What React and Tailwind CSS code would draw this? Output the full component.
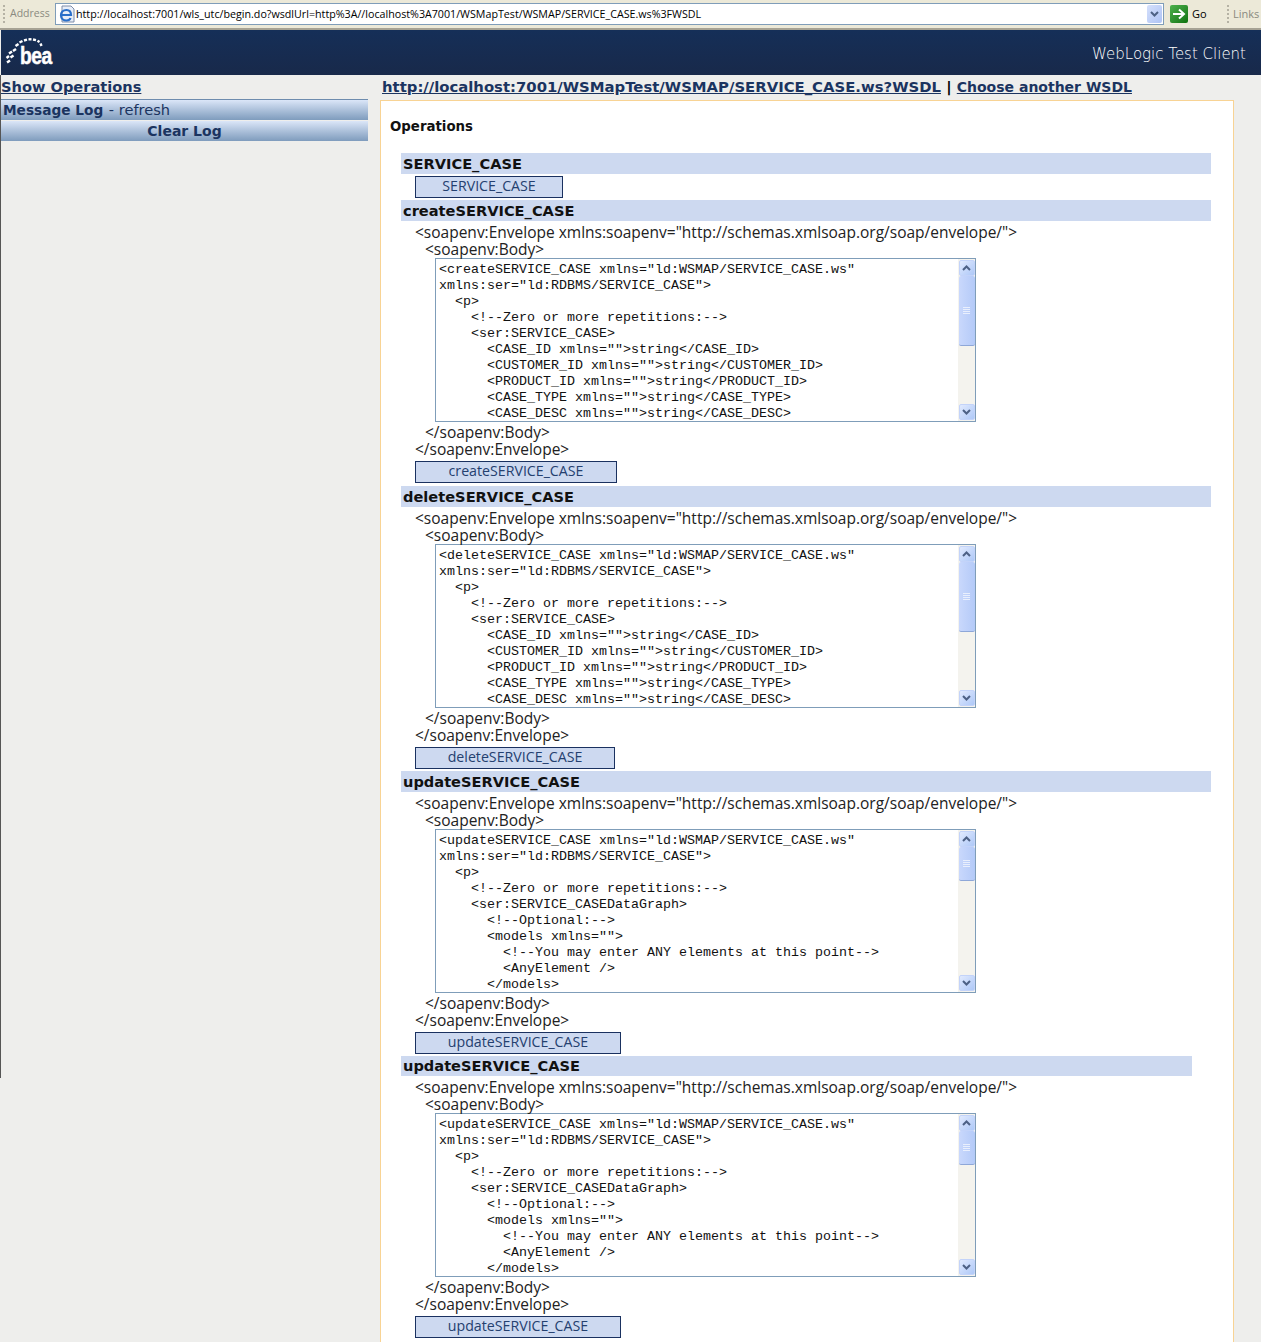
import React from 'react';

const verdana = 'font-["DejaVu_Sans",sans-serif]';
const tahoma = 'font-["Open_Sans",sans-serif]';

const createLines = (op) => `<${op}SERVICE_CASE xmlns="ld:WSMAP/SERVICE_CASE.ws"
xmlns:ser="ld:RDBMS/SERVICE_CASE">
  <p>
    <!--Zero or more repetitions:-->
    <ser:SERVICE_CASE>
      <CASE_ID xmlns="">string</CASE_ID>
      <CUSTOMER_ID xmlns="">string</CUSTOMER_ID>
      <PRODUCT_ID xmlns="">string</PRODUCT_ID>
      <CASE_TYPE xmlns="">string</CASE_TYPE>
      <CASE_DESC xmlns="">string</CASE_DESC>`;

const updateLines = `<updateSERVICE_CASE xmlns="ld:WSMAP/SERVICE_CASE.ws"
xmlns:ser="ld:RDBMS/SERVICE_CASE">
  <p>
    <!--Zero or more repetitions:-->
    <ser:SERVICE_CASEDataGraph>
      <!--Optional:-->
      <models xmlns="">
        <!--You may enter ANY elements at this point-->
        <AnyElement />
      </models>`;

const ScrollButton = ({ up }) => (
  <div className="h-[16px] w-[16px] rounded-[2px] bg-gradient-to-br from-[#e1eafe] to-[#aec8f7] border border-[#c3d3f9] flex items-center justify-center">
    <svg width="9" height="6" viewBox="0 0 9 6">
      <path d={up ? 'M1 5 L4.5 1.5 L8 5' : 'M1 1 L4.5 4.5 L8 1'} fill="none" stroke="#4d6185" strokeWidth="2" />
    </svg>
  </div>
);

const Scrollbar = ({ thumb }) => (
  <div className="w-[17px] h-full bg-[#f4f3ee] flex flex-col items-center py-px">
    <ScrollButton up />
    <div className={`${thumb} w-[16px] rounded-[2px] border-b border-[#8ea7d8] bg-gradient-to-r from-[#c9d8fc] to-[#b4caf8] flex items-center justify-center`}>
      <svg width="7" height="7" viewBox="0 0 7 7">
        <path d="M0 .5 H7 M0 2.5 H7 M0 4.5 H7 M0 6.5 H7" stroke="#e9effd" />
      </svg>
    </div>
    <div className="flex-1" />
    <ScrollButton />
  </div>
);

const SoapBox = ({ text, thumb }) => (
  <div className="ml-[34px] w-[541px] h-[164px] border border-[#7f9db9] bg-white flex overflow-hidden">
    <pre className='flex-1 overflow-hidden pl-[3px] pt-[3px] text-[13.33px] leading-[16px] text-[#111] font-["Liberation_Mono",monospace]'>{text}</pre>
    <Scrollbar thumb={thumb} />
  </div>
);

const SectionBar = ({ title, className = 'h-[21px] leading-[21px]' }) => (
  <div className={`${className} ${verdana} bg-[#cdd9f0] font-bold text-[14.6px] pl-[2px] text-[#111] overflow-hidden`}>
    {title}
  </div>
);

const OpButton = ({ label, width, className }) => (
  <div className={`${width} ${className} ${tahoma} ml-[14px] h-[22px] border border-[#1a3160] bg-[#cdd9f0] text-center text-[#24406f] text-[14.2px] leading-[18px]`}>
    {label}
  </div>
);

const Soap = ({ title, text, thumb, btnWidth, barClass }) => (
  <div>
    <SectionBar title={title} className={barClass} />
    <div className={`${tahoma} mt-[3px] text-[15.5px] leading-[17px] text-[#222] whitespace-nowrap`}>
      <div className="pl-[14px]">{'<soapenv:Envelope xmlns:soapenv="http://schemas.xmlsoap.org/soap/envelope/">'}</div>
      <div className="pl-[24px]">{'<soapenv:Body>'}</div>
    </div>
    <SoapBox text={text} thumb={thumb} />
    <div className={`${tahoma} mt-[2px] text-[15.5px] leading-[17px] text-[#222]`}>
      <div className="pl-[24px]">{'</soapenv:Body>'}</div>
      <div className="pl-[14px]">{'</soapenv:Envelope>'}</div>
    </div>
    <OpButton label={title} width={btnWidth} className="mt-[3px]" />
  </div>
);

const logoDashes = [
  [7, 61.5, 10, 59.5], [10.5, 56.5, 13.5, 54.5], [6.5, 57, 9, 55], [9, 52.5, 12, 50.5],
  [13, 50, 16, 48], [15.5, 45, 18.5, 43], [19.5, 41.5, 22.5, 40], [24, 39.5, 27, 38.7],
  [28.5, 38.3, 31.5, 38.3], [33, 38.5, 36, 39.2], [37.5, 39.7, 39.5, 41], [40.5, 42.5, 41.5, 45],
];

const BeaLogo = () => (
  <div className="relative w-[50px] h-[36px]">
    <svg width="50" height="36" viewBox="5 34 50 36" className="absolute left-0 top-0">
      {logoDashes.map(([x1, y1, x2, y2]) => (
        <line key={`${x1}-${y1}`} x1={x1} y1={y1} x2={x2} y2={y2} stroke="#fff" strokeWidth="2.4" />
      ))}
    </svg>
    <span className='absolute left-[15px] top-[8px] text-[24px] leading-[26px] font-bold text-white tracking-[-0.5px] [-webkit-text-stroke:0.5px_white] font-["Liberation_Sans",sans-serif] scale-x-[0.8] origin-left'>bea</span>
  </div>
);

const AddressBar = () => (
  <div className='h-[30px] bg-[#ece9d8] border-b-2 border-[#a6a294] flex items-center text-[11px] font-["Open_Sans",sans-serif]'>
    <div className="ml-[3px] w-[3px] h-[18px] border-l-2 border-dotted border-[#b5b2a4]" />
    <span className="ml-[4px] text-[#8a8a80] text-[10.5px] w-[45px]">Address</span>
    <div className="w-[1109px] h-[22px] border border-[#7f9db9] bg-white flex items-center">
      <svg width="18" height="18" viewBox="0 0 18 18" className="ml-[2px]">
        <path d="M4 1 H13 L16 4 V17 H4 Z" fill="#e8eef8" stroke="#7d8ca8" />
        <path d="M3.5 10 H13 C13 5.5 10.5 5 8.5 5 C5 5 3 7.5 3 10.5 C3 13.5 5.5 15.5 8.5 15.5 C10.5 15.5 12 14.5 12.5 13" fill="none" stroke="#2a6fc9" strokeWidth="2.2" />
      </svg>
      <span className='flex-1 text-[10.7px] text-black font-["Open_Sans",sans-serif] whitespace-nowrap'>
        http://localhost:7001/wls_utc/begin.do?wsdlUrl=http%3A//localhost%3A7001/WSMapTest/WSMAP/SERVICE_CASE.ws%3FWSDL
      </span>
      <div className="w-[15px] h-[18px] mr-px rounded-[2px] bg-gradient-to-br from-[#d5e0fb] to-[#aec3f5] flex items-center justify-center">
        <svg width="9" height="6" viewBox="0 0 9 6">
          <path d="M1 1 L4.5 4.5 L8 1" fill="none" stroke="#4d6185" strokeWidth="2" />
        </svg>
      </div>
    </div>
    <div className="ml-[6px] w-[18px] h-[18px] rounded-[2px] bg-gradient-to-br from-[#4db14d] to-[#0b730b] flex items-center justify-center">
      <svg width="14" height="12" viewBox="0 0 14 12">
        <path d="M1 6 H11 M7 1.5 L12 6 L7 10.5" fill="none" stroke="#fff" strokeWidth="2" />
      </svg>
    </div>
    <span className="ml-[4px] text-black text-[11px] w-[34px]">Go</span>
    <div className="ml-px w-[3px] h-[18px] border-l-2 border-dotted border-[#b5b2a4]" />
    <span className="ml-[3px] text-[#8a8a80] text-[11px]">Links</span>
  </div>
);

export default function App() {
  return (
    <div className="w-[1261px] h-[1342px] overflow-hidden bg-[#eeeeec] relative">
      <AddressBar />
      <div className="h-[45px] ml-px bg-gradient-to-b from-[#152f58] to-[#18294a] flex items-center justify-between pl-[4px] pr-[15px]">
        <BeaLogo />
        <span className={`${verdana} text-white text-[15px] font-extralight pt-[3px]`}>WebLogic Test Client</span>
      </div>

      <div className="flex">
        {/* left column */}
        <div className="w-[379px] shrink-0 ml-px">
          <div className={`${verdana} h-[24px] leading-[24px] text-[14.6px] font-bold text-[#1b3460] underline`}>Show Operations</div>
          <div className={`${verdana} w-[367px] h-[21px] border-t border-[#6e8cae] bg-gradient-to-b from-[#dbe6f8] to-[#7f9cbd] text-[14.6px] leading-[19px] pl-[2px] text-[#1b3460]`}>
            <span className="font-bold text-[13.7px]">Message Log</span> <span className="ml-px">- refresh</span>
          </div>
          <div className={`${verdana} w-[367px] h-[20px] mt-px bg-gradient-to-b from-[#dbe6f8] to-[#7f9cbd] text-[14px] leading-[20px] text-center font-bold text-[#1b3460]`}>
            Clear Log
          </div>
        </div>

        {/* main column */}
        <div className="flex-1 min-w-0">
          <div className={`${verdana} h-[25px] pl-[2px] leading-[24px] text-[14.85px] font-bold text-[#1b3460] whitespace-nowrap`}>
            <span className="underline">http://localhost:7001/WSMapTest/WSMAP/SERVICE_CASE.ws?WSDL</span>
            <span className="text-black"> | </span>
            <span className="underline text-[14px]">Choose another WSDL</span>
          </div>
          <div className="w-[854px] border border-[#f8d394] bg-white pl-[20px] pr-[22px] h-[1300px]">
            <div className={`${verdana} pt-[17px] -ml-[11px] text-[13.33px] leading-[18px] font-bold text-[#111]`}>Operations</div>
            <div className="mt-[17px]">
              <SectionBar title="SERVICE_CASE" />
              <OpButton label="SERVICE_CASE" width="w-[148px]" className="mt-[2px]" />
            </div>
            <div className="mt-[2px]">
              <Soap title="createSERVICE_CASE" text={createLines('create')} thumb="h-[70px]" btnWidth="w-[202px]" />
            </div>
            <div className="mt-[3px]">
              <Soap title="deleteSERVICE_CASE" text={createLines('delete')} thumb="h-[70px]" btnWidth="w-[200px]" />
            </div>
            <div className="mt-[2px]">
              <Soap title="updateSERVICE_CASE" text={updateLines} thumb="h-[34px]" btnWidth="w-[206px]" />
            </div>
            <div className="mt-[2px]">
              <Soap title="updateSERVICE_CASE" text={updateLines} thumb="h-[34px]" btnWidth="w-[206px]" barClass="w-[791px] h-[20px] leading-[19px]" />
            </div>
          </div>
        </div>
      </div>
      {/* frame edge down the left side */}
      <div className="absolute left-0 top-[75px] w-px h-[1003px] bg-[#555]" />
    </div>
  );
}
